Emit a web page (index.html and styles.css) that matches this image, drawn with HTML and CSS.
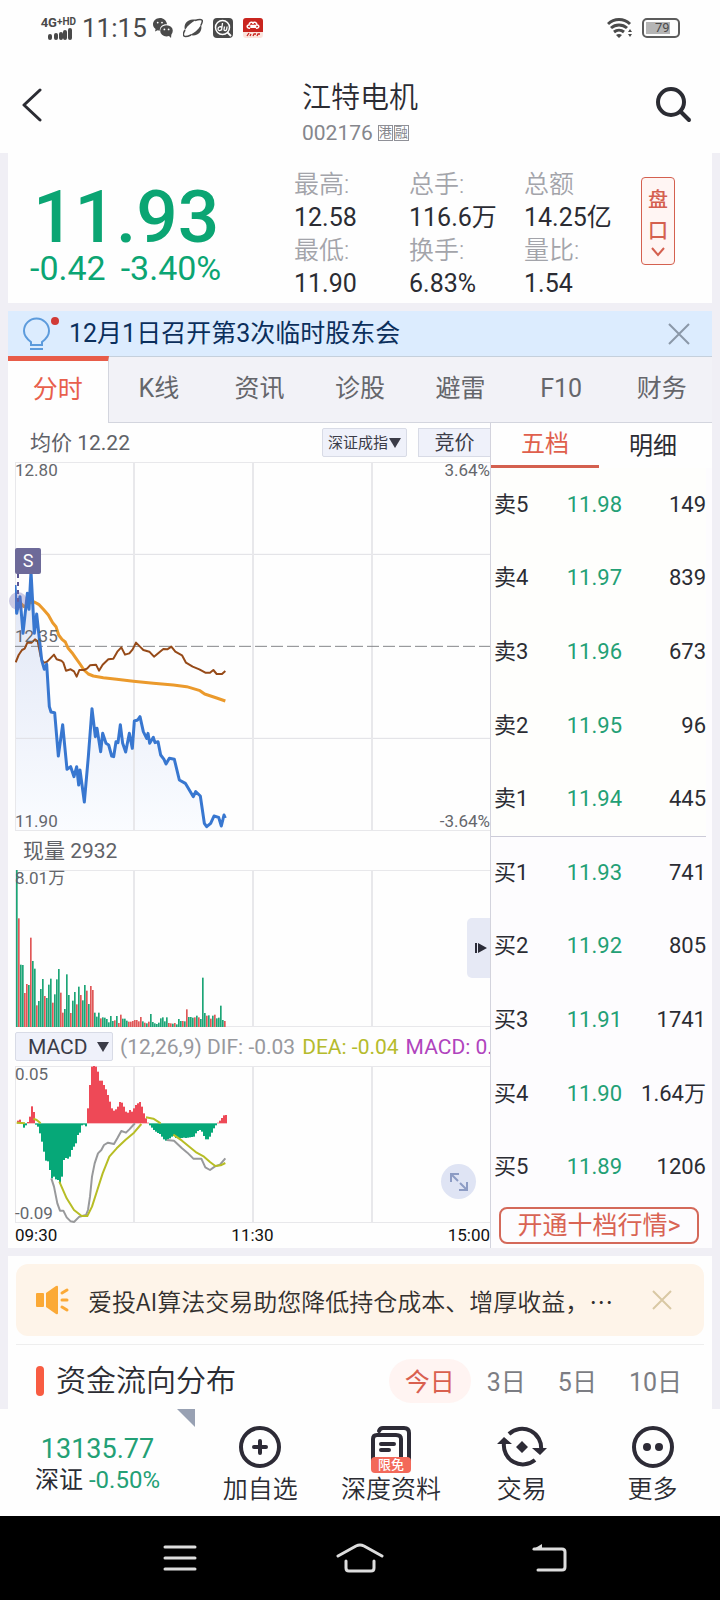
FILE: index.html
```
<!DOCTYPE html>
<html lang="zh-CN">
<head>
    <meta charset="UTF-8">
    <meta name="viewport" content="width=device-width, initial-scale=1.0">
    <title>江特电机 002176</title>
    <link rel="stylesheet" href="styles.css">
</head>
<body>
    <div class="status-bar">
        <div class="signal">
            <span>4G<small>+HD</small></span>
            <svg width="24" height="12" viewBox="0 0 24 12" fill="#4a4a4a">
                <rect x="0" y="6" width="4" height="6" rx="2"/>
                <rect x="6" y="5" width="4" height="7" rx="2"/>
                <rect x="11" y="4" width="4" height="8" rx="2"/>
                <rect x="15" y="2" width="4" height="10" rx="2"/>
                <rect x="20" y="0" width="4" height="12" rx="2"/>
            </svg>
        </div>
        <span class="clock">11:15</span>
        <svg width="20" height="20" viewBox="0 0 20 20">
            <path fill="#4a4a4a" d="M7 0C3 0 0 3 0 6.300c0 2 1 3.700 2.600 4.800L2 13.500l2.600-1.300 2.200.5C6.500 8.500 10 5.800 14 6.200 13.500 2.500 10.500 0 7 0z"/>
            <ellipse cx="13.500" cy="12.800" rx="6.300" ry="5.600" fill="#4a4a4a"/>
            <path fill="#4a4a4a" d="M15 17l3 3 .5-5z"/>
            <g fill="#fff"><circle cx="4.700" cy="4.600" r=".9"/><circle cx="9" cy="4.600" r=".9"/><circle cx="11.400" cy="11.400" r=".9"/><circle cx="15.600" cy="11.400" r=".9"/></g>
        </svg>
        <svg width="20" height="20" viewBox="0 0 20 20">
            <path fill="#4a4a4a" d="M2 12C0 6 5 0 13 2 9 4 5 7 2 12zM18 7c2 6-3 12-11 10 4-2 8-5 11-10z"/>
            <path fill="none" stroke="#4a4a4a" stroke-width="1.500" d="M12 2.500c4-1.500 7-1.500 7.300 0 .2 1.500-.5 3-1.500 5M2 12C.5 14.500 0 17 1 18s4 .3 7-1"/>
        </svg>
        <svg width="20" height="20" viewBox="0 0 20 20">
            <rect width="20" height="20" rx="4" fill="#4a4a4a"/>
            <circle cx="9.500" cy="9.500" r="7" fill="none" stroke="#fff" stroke-width="1.500"/>
            <path stroke="#fff" stroke-width="1.800" d="M14.500 14.500l3.500 3.500"/>
            <path fill="none" stroke="#fff" stroke-width="1.300" d="M9.500 5l-1 7.500M8.700 9.500c-1-1.500-3.700-.5-3.700 1.500s2.700 2 3.500.3M11.500 8.500l-.5 3c0 1.500 2 1.500 2.600 0l.5-3"/>
        </svg>
        <svg width="20" height="20" viewBox="0 0 20 20">
            <rect width="20" height="20" rx="3" fill="#fbe4dd"/>
            <path d="M3 0h14a3 3 0 0 1 3 3v11H0V3a3 3 0 0 1 3-3z" fill="#c9251f"/>
            <path fill="none" stroke="#fff" stroke-width="1.500" d="M7 10c-3 1-4-3-1-3 0-3 4-4 4-1 0-3 4-2 4 1 3 0 2 4-1 3M8 10V7.500h1.500V10M11 10V7.500h1.500V10"/>
            <path fill="none" stroke="#c9251f" stroke-width="1.300" d="M4 18l2-3M7 18l1-2M10 18l1-2h2M14 18l1-2h2"/>
        </svg>
        <svg class="wifi" width="25" height="20" viewBox="0 0 25 20">
            <g fill="none" stroke="#4a4a4a" stroke-width="3">
                <path d="M1 6a16 16 0 0 1 22 0"/><path d="M4 10a12 12 0 0 1 16 0"/><path d="M7 14a8 8 0 0 1 10 0"/>
            </g>
            <path fill="#4a4a4a" d="M9 17q3-2 6 0l-3 3zM21 14l2-3 2 3zM21 16h4l-2 3z"/>
        </svg>
        <div class="battery"><span>79</span></div>
    </div>

    <header class="header">
        <button class="icon-btn" aria-label="返回">
            <svg width="20" height="36" viewBox="0 0 20 36"><path fill="none" stroke="#2b2c33" stroke-width="3" stroke-linecap="round" stroke-linejoin="round" d="M18 3L2 18l16 15"/></svg>
        </button>
        <div class="stock">
            <h1>江特电机</h1>
            <p>002176 <i>港</i><i>融</i></p>
        </div>
        <button class="icon-btn" aria-label="搜索">
            <svg width="36" height="36" viewBox="0 0 36 36" fill="none" stroke="#2b2c33"><circle cx="15" cy="15" r="13" stroke-width="4"/><path stroke-width="4" stroke-linecap="round" d="M25 25l8 8"/></svg>
        </button>
    </header>

    <main>
        <section class="quote">
            <div class="price">
                <strong>11.93</strong>
                <p><span>-0.42</span><span>-3.40%</span></p>
            </div>
            <dl class="stats">
                <div><dt>最高:</dt><dd>12.58</dd></div>
                <div><dt>总手:</dt><dd>116.6万</dd></div>
                <div><dt>总额</dt><dd>14.25亿</dd></div>
                <div><dt>最低:</dt><dd>11.90</dd></div>
                <div><dt>换手:</dt><dd>6.83%</dd></div>
                <div><dt>量比:</dt><dd>1.54</dd></div>
            </dl>
            <button class="pankou">
                <span>盘</span><span>口</span>
                <svg width="14" height="10" viewBox="0 0 14 10"><path fill="none" stroke="#d4604f" stroke-width="2" d="M1 1l6 7 6-7"/></svg>
            </button>
        </section>

        <div class="banner">
            <svg width="36" height="34" viewBox="0 0 36 34">
                <path fill="none" stroke="#5c9bdc" stroke-width="2" d="M8 28v-3C4 22 1 19 1 14a12.500 12.500 0 0 1 25 0c0 5-3 8-7 11v3zM7 32h13"/>
                <circle cx="32" cy="4" r="4" fill="#d13a36"/>
            </svg>
            <a href="#">12月1日召开第3次临时股东会</a>
            <button class="close" aria-label="关闭">
                <svg width="22" height="22" viewBox="0 0 22 22"><path stroke="#8b98a8" stroke-width="2" d="M1 1l20 20M21 1L1 21"/></svg>
            </button>
        </div>

        <nav class="tabs">
            <a href="#" class="active">分时</a>
            <a href="#">K线</a>
            <a href="#">资讯</a>
            <a href="#">诊股</a>
            <a href="#">避雷</a>
            <a href="#">F10</a>
            <a href="#">财务</a>
        </nav>

        <section class="board">
            <div class="charts">
                <div class="chart-head first">
                    <span class="avg">均价 12.22</span>
                    <span class="select index-select">
                        <select aria-label="对比指数"><option>深证成指</option></select>
                        <svg width="12" height="10" viewBox="0 0 12 10"><path fill="#3b3c48" d="M0 0h12L6 10z"/></svg>
                    </span>
                    <button class="bid">竞价</button>
                </div>
                <div class="plot price-plot">
                    <svg viewBox="45 126 1425 1107" preserveAspectRatio="none">
                        <defs>
                            <linearGradient id="fill" x1="0" y1="0" x2="0" y2="1">
                                <stop offset="0" stop-color="#dfe5f5"/>
                                <stop offset="1" stop-color="#fafcff"/>
                            </linearGradient>
                        </defs>
                        <path fill="url(#fill)" d="M45 495L50 580 60 530 69 640 82 520 87 568 93 455 103 640 110 582 125 720 133 748 140 732 148 860 153 876 164 878 175 1008 188 914 201 1048 212 1040 222 1070 230 1040 236 1095 240 1050 253 1146 265 1010 276 866 286 950 291 925 302 995 308 940 318 970 326 975 335 1008 341 1010 348 965 354 968 361 914 368 970 377 996 388 940 397 985 403 903 413 900 420 890 430 935 440 955 444 940 449 970 460 952 465 968 474 965 482 1005 492 1018 498 1032 508 1015 523 1018 538 1080 556 1090 580 1130 587 1115 601 1128 613 1210 620 1220 632 1210 642 1188 656 1192 664 1218 672 1185 676 1194V1233H45z"/>
                        <path class="grid" d="M45 403H1470M45 955H1470"/>
                        <path class="grid thick" d="M45 126H1470M45 1233H1470M45 126V1233M402 126V1233M759 126V1233M1116 126V1233"/>
                        <path class="dash" d="M45 679H1470"/>
                        <path class="line avg-line" d="M45 540L60 548 72 560 90 548 103 546 116 553 130 568 145 585 158 608 168 620 176 645 186 658 196 666 204 684 216 698 228 715 240 732 252 750 265 762 280 768 310 773 350 778 400 784 460 790 520 795 560 800 600 812 614 822 650 834 676 843"/>
                        <path class="line index-line" d="M47 727L56 705 66 690 74 686 82 668 95 668 105 658 113 664 122 710 130 728 140 726 148 718 162 704 170 718 184 722 190 728 198 752 212 748 222 754 230 770 238 750 252 750 262 745 270 736 288 734 297 752 308 734 325 718 340 716 352 695 364 682 375 704 388 700 398 688 408 668 420 680 430 690 448 695 462 710 480 695 490 687 502 688 514 680 526 695 546 706 558 728 578 740 598 748 616 758 630 758 640 750 650 762 666 762 676 753"/>
                        <path class="line price-line" d="M45 495L50 580 60 530 69 640 82 520 87 568 93 455 103 640 110 582 125 720 133 748 140 732 148 860 153 876 164 878 175 1008 188 914 201 1048 212 1040 222 1070 230 1040 236 1095 240 1050 253 1146 265 1010 276 866 286 950 291 925 302 995 308 940 318 970 326 975 335 1008 341 1010 348 965 354 968 361 914 368 970 377 996 388 940 397 985 403 903 413 900 420 890 430 935 440 955 444 940 449 970 460 952 465 968 474 965 482 1005 492 1018 498 1032 508 1015 523 1018 538 1080 556 1090 580 1130 587 1115 601 1128 613 1210 620 1220 632 1210 642 1188 656 1192 664 1218 672 1185 676 1194"/>
                        <path class="trade-line" d="M54 462V545"/>
                    </svg>
                    <span class="label top left">12.80</span>
                    <span class="label top right">3.64%</span>
                    <span class="label middle left">12.35</span>
                    <span class="label bottom left">11.90</span>
                    <span class="label bottom right">-3.64%</span>
                    <span class="trade">S</span>
                    <span class="trade-dot"></span>
                </div>

                <div class="chart-head"><span>现量 2932</span></div>
                <div class="plot">
                    <svg id="volume" viewBox="45 120 1425 471" preserveAspectRatio="none">
                        <path class="grid thick" d="M45 120H1470M45 591H1470M45 120V591M402 120V591M759 120V591M1116 120V591"/>
                    </svg>
                    <span class="label top left">8.01万</span>
                    <button class="expand" aria-label="收起盘口">
                        <svg width="12" height="10" viewBox="0 0 12 10" fill="#2b2c38"><path d="M0 0h2v10H0zM3 0l9 5-9 5z"/></svg>
                    </button>
                </div>

                <div class="chart-head macd-head">
                    <span class="select macd-select">
                        <select aria-label="指标"><option>MACD</option></select>
                        <svg width="12" height="10" viewBox="0 0 12 10"><path fill="#3b3c48" d="M0 0h12L6 10z"/></svg>
                    </span>
                    <span class="dif">(12,26,9) DIF: -0.03</span>
                    <span class="dea">DEA: -0.04</span>
                    <span class="macd">MACD: 0.</span>
                </div>
                <div class="plot">
                    <svg id="macd" viewBox="45 708 1425 471" preserveAspectRatio="none">
                        <path class="grid thick" d="M45 708H1470M45 1179H1470M45 708V1179M402 708V1179M759 708V1179M1116 708V1179"/>
                        <path class="line dif-line" d="M154 1045L162 1070 172 1120 180 1142 190 1142 200 1162 212 1174 222 1176 238 1160 258 1155 264 1140 270 1100 276 1040 284 1000 294 970 304 960 312 945 324 938 342 942 352 925 364 903 378 908 388 898 400 885 405 880M500 930L522 932 546 955 562 968 580 986 604 986 616 1012 630 1020 644 1010 660 1004 676 985"/>
                        <path class="line dea-line" d="M50 878L75 880M100 866L110 870 122 880M178 1055L200 1105 222 1140 245 1158 262 1158 276 1130 292 1080 308 1030 328 980 350 955 376 930 402 908 424 882M438 862L460 866 482 880M520 914L546 932 568 950 590 968 612 980 630 996 646 1008 662 1006 676 999"/>
                    </svg>
                    <span class="label top left">0.05</span>
                    <span class="label bottom left">-0.09</span>
                    <button class="fullscreen" aria-label="全屏">
                        <svg width="20" height="20" viewBox="0 0 20 20" fill="none" stroke="#8d9cc4" stroke-width="2"><path d="M2 10V2h8M2 2l7 7M18 10v8h-8M11 11l7 7"/></svg>
                    </button>
                </div>
                <div class="times"><span>09:30</span><span>11:30</span><span>15:00</span></div>
            </div>

            <div class="orders">
                <div class="order-tabs">
                    <button class="active">五档</button>
                    <button>明细</button>
                </div>
                <table>
                    <tbody class="sell">
                        <tr><th>卖5</th><td>11.98</td><td>149</td></tr>
                        <tr><th>卖4</th><td>11.97</td><td>839</td></tr>
                        <tr><th>卖3</th><td>11.96</td><td>673</td></tr>
                        <tr><th>卖2</th><td>11.95</td><td>96</td></tr>
                        <tr><th>卖1</th><td>11.94</td><td>445</td></tr>
                    </tbody>
                    <tbody class="buy">
                        <tr><th>买1</th><td>11.93</td><td>741</td></tr>
                        <tr><th>买2</th><td>11.92</td><td>805</td></tr>
                        <tr><th>买3</th><td>11.91</td><td>1741</td></tr>
                        <tr><th>买4</th><td>11.90</td><td>1.64万</td></tr>
                        <tr><th>买5</th><td>11.89</td><td>1206</td></tr>
                    </tbody>
                </table>
                <button class="level2">开通十档行情&gt;</button>
            </div>
        </section>

        <section class="more-info">
            <div class="notice">
                <svg width="34" height="30" viewBox="0 0 34 30" fill="#fba936">
                    <rect x="0" y="8" width="8" height="14" rx="1"/>
                    <path d="M10 8L20 1q2-1 2 1v26q0 2-2 1l-10-7z"/>
                    <path stroke="#fba936" stroke-width="3" stroke-linecap="round" d="M26 8l5-3M26 15h5M26 22l5 3"/>
                </svg>
                <p>爱投AI算法交易助您降低持仓成本、增厚收益，…</p>
                <button class="close" aria-label="关闭">
                    <svg width="20" height="20" viewBox="0 0 20 20"><path stroke="#d9c8a4" stroke-width="2" d="M1 1l18 18M19 1L1 19"/></svg>
                </button>
            </div>
            <div class="flow">
                <h2>资金流向分布</h2>
                <button class="active">今日</button>
                <button>3日</button>
                <button>5日</button>
                <button>10日</button>
            </div>
        </section>
    </main>

    <footer class="toolbar">
        <a href="#" class="index">
            <strong>13135.77</strong>
            <span>深证 <em>-0.50%</em></span>
        </a>
        <a href="#">
            <svg width="42" height="42" viewBox="0 0 42 42" fill="none" stroke="#2d2b36"><circle cx="21" cy="21" r="19" stroke-width="4"/><path stroke-width="4" stroke-linecap="round" d="M15 21h12M21 15v12"/></svg>
            加自选
        </a>
        <a href="#">
            <span class="doc">
                <svg width="42" height="44" viewBox="0 0 42 44" fill="none" stroke="#2d2b36" stroke-width="4" stroke-linecap="round">
                    <path d="M9 5q1-3 4-3h21q5 0 5 5v30"/><path d="M3 37V13q0-4 4-4h19q5 0 5 4v22"/><path d="M11 18h13M11 24h8"/>
                </svg>
                <b>限免</b>
            </span>
            深度资料
        </a>
        <a href="#">
            <svg width="50" height="42" viewBox="0 0 50 42" fill="none" stroke="#2d2b36" stroke-width="4">
                <path d="M12 8a19 19 0 0 1 32 16M38 34A19 19 0 0 1 7 17"/>
                <path fill="#2d2b36" stroke="none" d="M0 18L7 11l8 7zM35 22h15l-7 7zM25 15l6 6-6 6-6-6z"/>
            </svg>
            交易
        </a>
        <a href="#">
            <svg width="42" height="42" viewBox="0 0 42 42" fill="none" stroke="#2d2b36"><circle cx="21" cy="21" r="19" stroke-width="4"/><g fill="#2d2b36" stroke="none"><circle cx="15" cy="21" r="4"/><circle cx="27" cy="21" r="4"/></g></svg>
            更多
        </a>
    </footer>

    <div class="system-nav">
        <button aria-label="菜单"><svg width="34" height="28" viewBox="0 0 34 28"><path stroke="#ddd" stroke-width="3" stroke-linecap="round" d="M2 3h30M2 14h30M2 25h30"/></svg></button>
        <button aria-label="主页"><svg width="48" height="30" viewBox="0 0 48 30"><path fill="none" stroke="#ddd" stroke-width="3" stroke-linecap="round" stroke-linejoin="round" d="M2 13L20 3q4-2 8 0l18 10M10 18v7q0 3 3 3h22q3 0 3-3v-7"/></svg></button>
        <button aria-label="返回"><svg width="54" height="28" viewBox="0 0 54 28"><path fill="none" stroke="#ddd" stroke-width="3" stroke-linecap="round" stroke-linejoin="round" d="M25 26h24q3 0 3-3V8q0-3-3-3H21"/><path fill="#ddd" d="M19 6l10-6v6z"/></svg></button>
    </div>

    <script src="charts.js"></script>
</body>
</html>
```
FILE: charts.js
```
// 每根柱子的顶端坐标，r 开头为上涨，g 开头为下跌
const volume = ('g120 r265 g404 g405 r489 r462 g465 r323 g393 g416 r526 g513 g477 g447 r498 g504 g464 g446 r518 g493 ' +
    'g448 g417 r488 r548 g537 g433 g495 r549 g512 g486 r523 g470 r495 g511 g465 r482 g522 r468 r480 g548 ' +
    'g560 g548 r565 g562 g563 g567 g577 g558 g573 r571 g558 r579 r554 g566 g566 g572 r575 r575 r573 r570 ' +
    'r570 r574 r561 g574 r578 g580 r575 g552 g576 g580 g582 g578 g565 g562 g574 g562 r579 r580 g581 r579 ' +
    'g583 g567 g573 r573 g574 r538 g561 g561 g563 r562 g557 r562 g567 g443 g549 r557 g556 r566 g557 ' +
    'r554 g565 g563 g527 g570 r573').split(' ');

const macd = [872, 869, 877, 893, 886, 876, 860, 829, 846, 884, 890, 910, 935, 965, 992, 994, 1020, 1045, 1040, 1048,
    1050, 1060, 1040, 990, 984, 986, 980, 960, 950, 940, 915, 908, 886, 884, 889, 835, 765, 710, 708, 710,
    725, 752, 752, 765, 778, 795, 815, 835, 842, 838, 830, 816, 818, 830, 845, 848, 840, 845, 835, 825,
    820, 816, 830, 850, 865, 878, 886, 893, 900, 905, 909, 912, 920, 928, 932, 928, 925, 920, 918, 924,
    923, 925, 924, 923, 924, 923, 922, 921, 920, 910, 903, 900, 905, 918, 928, 928, 920, 908, 895, 886,
    878, 872, 864, 856, 855];

function drawBars(svg, bars, width) {
    const first = svg.querySelector('.line');
    bars.forEach(bar => {
        const rect = document.createElementNS('http://www.w3.org/2000/svg', 'rect');
        rect.setAttribute('x', bar.x);
        rect.setAttribute('y', Math.min(bar.top, bar.base));
        rect.setAttribute('width', width);
        rect.setAttribute('height', Math.max(Math.abs(bar.base - bar.top), 2));
        rect.setAttribute('class', bar.up ? 'up' : 'down');
        svg.insertBefore(rect, first);
    });
}

drawBars(document.getElementById('volume'), volume.map((v, i) => {
    return { x: 48 + i * 6, top: Number(v.slice(1)), base: 591, up: v[0] === 'r' };
}), 5);

drawBars(document.getElementById('macd'), macd.map((v, i) => {
    return { x: 51 + i * 6, top: v, base: 880, up: v < 880 };
}), 6);
```
FILE: styles.css
```
* {
    box-sizing: border-box;
    margin: 0;
    padding: 0;
}

body {
    font-family: 'Roboto', 'Noto Sans CJK SC', sans-serif;
    font-size: 24px;
    color: #2b2c33;
    background: #fefefe;
}

a {
    color: inherit;
    text-decoration: none;
}

button, select {
    font: inherit;
    color: inherit;
    border: none;
    background: none;
    cursor: pointer;
}

svg {
    display: block;
    flex-shrink: 0;
}

/* 状态栏 */
.status-bar {
    display: flex;
    align-items: center;
    gap: 10px;
    height: 56px;
    padding: 0 40px;
    color: #4a4a4a;
}

.signal {
    display: flex;
    flex-direction: column;
    align-items: flex-end;
    width: 36px;
    font-size: 13px;
    font-weight: 700;
    line-height: 10px;
    white-space: nowrap;
}

.signal small {
    font-size: 10px;
    vertical-align: 2px;
}

.signal svg {
    margin-right: 4px;
}

.clock {
    margin: 0 -4px;
    font-size: 26px;
    line-height: 30px;
}

.wifi {
    margin-left: auto;
}

.battery {
    display: flex;
    width: 38px;
    height: 20px;
    padding: 2px;
    border: 2px solid #5c5c5c;
    border-radius: 5px;
    font-size: 13px;
    line-height: 12px;
}

.battery span {
    width: 79%;
    padding-left: 9px;
    background: #b5b5b5;
}

/* 顶部标题 */
.header {
    display: flex;
    align-items: center;
    justify-content: space-between;
    height: 97px;
    padding: 0 28px 0 22px;
}

.icon-btn {
    display: flex;
    width: 36px;
}

.stock {
    padding: 18px 0 0 6px;
}

.stock h1 {
    font-size: 29px;
    line-height: 36px;
    font-weight: 350;
}

.stock p {
    display: flex;
    align-items: center;
    gap: 1px;
    margin-top: 3px;
    font-size: 21px;
    line-height: 28px;
    color: #85868c;
}

.stock i {
    border: 1px solid #8f9097;
    font-size: 13px;
    line-height: 14px;
    font-style: normal;
}

.stock i:first-of-type {
    margin-left: 4px;
}

/* 行情 */
main {
    padding: 0 8px;
    background: #f0eff5;
}

.quote {
    display: flex;
    align-items: flex-start;
    height: 150px;
    padding: 15px 37px 0 22px;
    background: #fefefe;
}

.price {
    width: 264px;
    color: #0ba573;
    white-space: nowrap;
}

.price strong {
    display: block;
    padding: 12px 0 0 3px;
    font-size: 73px;
    line-height: 74px;
    font-weight: 500;
}

.price p {
    display: flex;
    gap: 15px;
    font-size: 34px;
    line-height: 28px;
}

.stats {
    flex: 1;
    display: grid;
    grid-template-columns: repeat(3, 1fr);
    margin-right: 2px;
}

.stats dt, .stats dd {
    font-size: 25px;
    line-height: 33px;
    white-space: nowrap;
}

.stats dt {
    color: #a3a4aa;
    font-weight: 350;
}

.pankou {
    display: flex;
    flex-direction: column;
    align-items: center;
    width: 34px;
    height: 88px;
    margin-top: 9px;
    padding-top: 7px;
    border: 1px solid #d4604f;
    border-radius: 4px;
    background: #fff5f3;
    font-size: 20px;
    line-height: 31px;
    font-weight: 500;
    color: #d4604f;
}

.banner {
    display: flex;
    align-items: center;
    gap: 10px;
    height: 45px;
    margin-top: 8px;
    padding: 0 22px 0 15px;
    background: #dcecfe;
    color: #0b2f5c;
    font-size: 25px;
    line-height: 36px;
}

.close {
    display: flex;
    margin-left: auto;
}

.tabs {
    display: grid;
    grid-template-columns: repeat(7, 1fr);
    height: 67px;
    background: #f2f2f7;
    border-top: 1px solid #c5d0dc;
    border-bottom: 1px solid #d3d5de;
    color: #65666b;
    font-size: 25px;
    line-height: 64px;
    text-align: center;
}

.tabs .active {
    height: 67px;
    margin-top: -1px;
    border-top: 5px solid #e85c49;
    border-right: 1px solid #d3d5de;
    background: #fefefe;
    color: #e8604c;
    line-height: 58px;
}

/* 分时图 */
.board {
    display: flex;
    background: #fefefe;
}

.charts {
    flex: 1;
    min-width: 0;
    padding-left: 7px;
    border-right: 1px solid #d3d3dd;
}

.chart-head {
    display: flex;
    align-items: center;
    height: 39px;
    padding-left: 8px;
    color: #606268;
    font-size: 21px;
    line-height: 28px;
    white-space: nowrap;
    overflow: hidden;
}

.chart-head.first {
    padding-left: 15px;
}

.avg {
    margin-right: auto;
}

.select {
    display: flex;
    align-items: center;
    height: 29px;
    border: 1px solid #d8dbe6;
    border-radius: 2px;
    background: #eff1fa;
    color: #3b3c48;
}

.select select {
    appearance: none;
}

.index-select {
    padding: 0 5px;
    font-size: 15px;
}

.macd-select {
    gap: 9px;
    padding: 0 3px 0 12px;
}

.bid {
    width: 72px;
    height: 29px;
    margin-left: 11px;
    border: 1px solid #d8dbe6;
    border-right: none;
    background: #eff1fa;
    color: #3b3c48;
    font-size: 20px;
    line-height: 26px;
}

.macd-head {
    gap: 7px;
    padding-left: 0;
}

.dif {
    color: #97989d;
}

.dea {
    color: #b5bb2c;
}

.macd {
    color: #b044bd;
}

.plot {
    position: relative;
    height: 157px;
}

.price-plot {
    height: 369px;
}

.plot > svg {
    width: 100%;
    height: 100%;
}

.plot path {
    vector-effect: non-scaling-stroke;
}

.grid {
    fill: none;
    stroke: #dfdfe4;
    stroke-width: 1px;
}

.grid.thick {
    stroke: #e8e8eb;
    stroke-width: 2px;
}

.dash {
    stroke: #85868a;
    stroke-width: 1px;
    stroke-dasharray: 12px 4px;
}

.line {
    fill: none;
    stroke-width: 2px;
    stroke-linejoin: round;
}

.avg-line {
    stroke: #eb9a2c;
    stroke-width: 3px;
}

.index-line {
    stroke: #964a18;
}

.price-line {
    stroke: #3877d0;
    stroke-width: 3px;
}

.trade-line {
    stroke: #5b5694;
    stroke-width: 2px;
    stroke-dasharray: 4px 4px;
}

.dif-line {
    stroke: #98999b;
}

.dea-line {
    stroke: #b7bd25;
}

.up {
    fill: #e05757;
}

.down {
    fill: #1ca576;
}

#macd .up {
    fill: #ee4957;
}

#macd .down {
    fill: #06a878;
}

.label {
    position: absolute;
    color: #65676c;
    font-size: 17px;
    line-height: 17px;
}

.label.left {
    left: 0;
}

.label.right {
    right: 0;
}

.label.top {
    top: 0;
}

.label.middle {
    top: 45%;
}

.label.bottom {
    bottom: 1px;
}

.trade {
    position: absolute;
    top: 86px;
    left: 0;
    width: 26px;
    height: 26px;
    border-radius: 2px;
    background: #6d6a99;
    color: #fff;
    font-size: 18px;
    line-height: 26px;
    text-align: center;
}

.trade-dot {
    position: absolute;
    top: 130px;
    left: -6px;
    width: 18px;
    height: 18px;
    border-radius: 50%;
    background: rgba(109, 106, 180, 0.35);
}

.expand {
    position: absolute;
    top: 48px;
    right: 0;
    display: flex;
    align-items: center;
    width: 23px;
    height: 60px;
    padding-left: 8px;
    border-radius: 5px 0 0 5px;
    background: #e6e9f5;
}

.fullscreen {
    position: absolute;
    right: 14px;
    bottom: 24px;
    display: flex;
    align-items: center;
    justify-content: center;
    width: 35px;
    height: 35px;
    border-radius: 50%;
    background: #dfe4f4;
}

.times {
    display: flex;
    justify-content: space-between;
    color: #111;
    font-size: 17px;
    line-height: 25px;
}

/* 五档盘口 */
.orders {
    display: flex;
    flex-direction: column;
    width: 221px;
    background: #fdfcfe;
}

.order-tabs {
    display: flex;
    height: 45px;
    background: #fefefe;
}

.order-tabs button {
    width: 108px;
    font-size: 24px;
    line-height: 38px;
}

.order-tabs .active {
    border-bottom: 3px solid #d4604f;
    color: #e0604d;
}

.orders table {
    height: 736px;
    margin-right: 6px;
    border-collapse: collapse;
}

.sell {
    border-bottom: 1px solid #cccbd8;
    background: #fefefc;
}

.orders th, .orders td {
    height: 73px;
    font-size: 22px;
    line-height: 32px;
    font-weight: 400;
}

.orders th {
    width: 40px;
    padding-left: 3px;
    text-align: left;
    white-space: nowrap;
}

.orders td {
    text-align: right;
}

.orders td:nth-child(2) {
    width: 91px;
    color: #23a075;
}

.level2 {
    height: 37px;
    margin: 3px 13px 0 8px;
    border: 2px solid #d4695a;
    border-radius: 8px;
    color: #d96454;
    font-size: 25px;
    line-height: 32px;
}

/* 公告与资金流向 */
.more-info {
    margin-top: 8px;
    padding: 8px 8px 0;
    background: #fefefe;
}

.notice {
    display: flex;
    align-items: center;
    gap: 18px;
    height: 72px;
    padding: 0 32px 0 20px;
    border-radius: 12px;
    background: #fef4e9;
    color: #33302e;
}

.notice p {
    font-family: 'Noto Sans CJK SC', sans-serif;
    font-weight: 350;
    white-space: nowrap;
}

.flow {
    display: flex;
    align-items: center;
    gap: 32px;
    height: 65px;
    margin-top: 8px;
    padding: 7px 22px 0 20px;
    border-top: 1px solid #eee;
    color: #7c7d83;
}

.flow h2 {
    display: flex;
    align-items: center;
    gap: 12px;
    margin-right: auto;
    color: #2b2c33;
    font-size: 30px;
    line-height: 40px;
    font-weight: 350;
}

.flow h2::before {
    content: '';
    width: 8px;
    height: 30px;
    border-radius: 4px;
    background: #f85c42;
}

.flow button {
    font-size: 25px;
    line-height: 40px;
    padding-top: 4px;
}

.flow .active {
    margin: 0 -16px;
    padding: 4px 16px 0;
    border-radius: 22px;
    background: #fff4f2;
    color: #d9604f;
}

/* 底部工具栏 */
.toolbar {
    display: grid;
    grid-template-columns: 195px repeat(4, 1fr);
    height: 107px;
    padding-right: 2px;
    background: #fefefe;
}

.toolbar a {
    display: flex;
    flex-direction: column;
    align-items: center;
    padding-top: 17px;
    font-size: 25px;
    line-height: 44px;
    font-weight: 350;
}

.toolbar .index {
    position: relative;
    padding-top: 24px;
    font-size: 24px;
    line-height: 30px;
    font-weight: 400;
}

.index strong {
    font-size: 27px;
    line-height: 32px;
    font-weight: 400;
}

.index strong, .index em {
    color: #23a075;
    font-style: normal;
}

.index::after {
    content: '';
    position: absolute;
    top: 0;
    right: 0;
    border-top: 18px solid #98a1b3;
    border-left: 18px solid transparent;
}

.doc {
    position: relative;
    height: 42px;
}

.doc b {
    position: absolute;
    left: 1px;
    bottom: -5px;
    width: 40px;
    border-radius: 4px;
    background: #f3695a;
    color: #fff;
    font-size: 13px;
    line-height: 16px;
    font-weight: 500;
    text-align: center;
}

.system-nav {
    display: grid;
    grid-template-columns: repeat(3, 1fr);
    height: 84px;
    padding: 0 90px;
    background: #000;
}

.system-nav button {
    display: flex;
    align-items: center;
    justify-content: center;
}
```
